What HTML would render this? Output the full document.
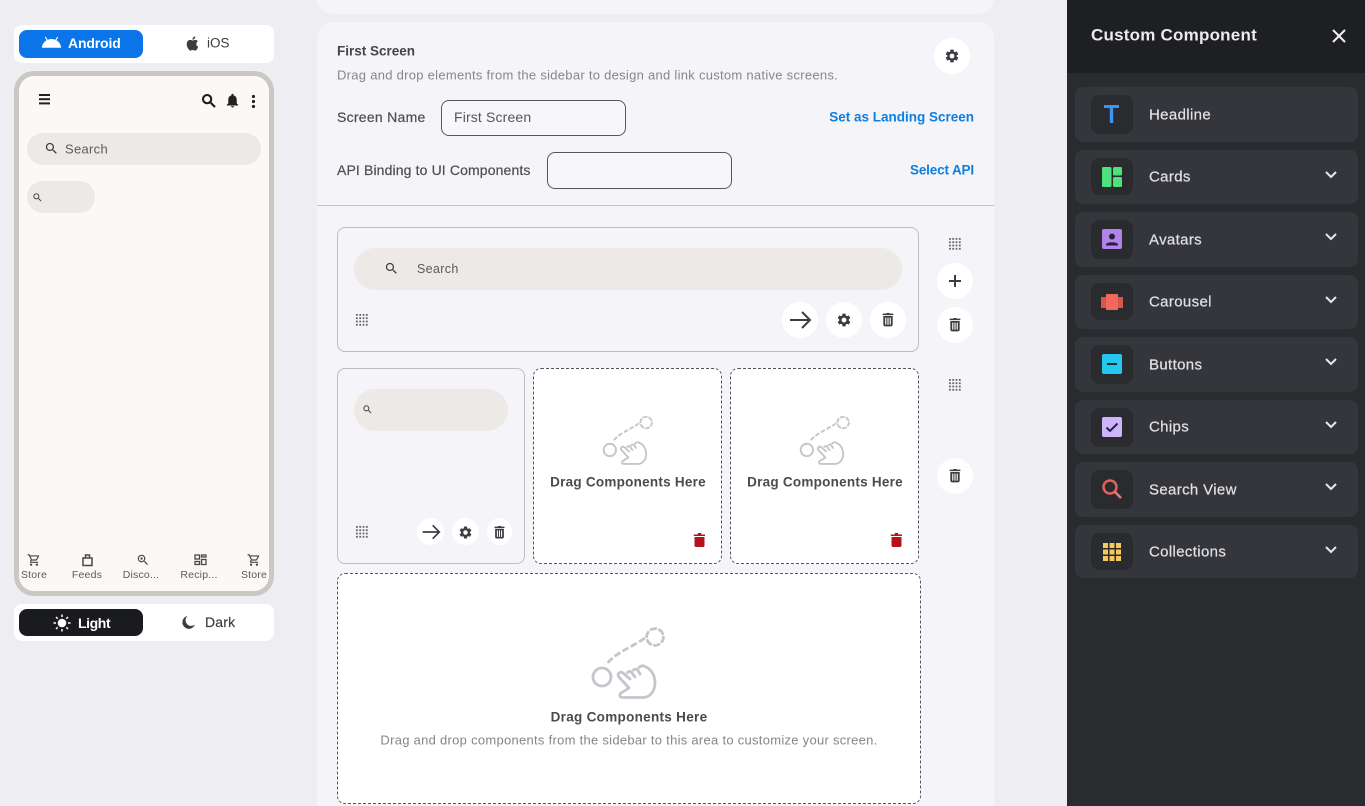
<!DOCTYPE html>
<html><head><meta charset="utf-8"><title>Custom Component</title>
<style>
html,body{margin:0;padding:0;height:806px;overflow:hidden}
body{width:1365px;position:relative;background:#eeeef2;font-family:"Liberation Sans",sans-serif;color:#3c3d42}
.a,.t,svg.i{position:absolute}
svg.i{overflow:visible}
.t{white-space:nowrap;transform:translateY(-50%);line-height:1}
.m{-webkit-text-stroke:.2px currentColor}
.c{transform:translate(-50%,-50%)}
.r{transform:translate(-100%,-50%)}
.b{font-weight:bold}
.circ{position:absolute;background:#fff;border-radius:50%}
.item{position:absolute;left:1075px;width:283px;background:#35363b;border-radius:8px}
.tile{position:absolute;left:1091px;width:42px;height:39px;background:#2a2b2f;border-radius:8px}
.lbl{font-size:15px;color:#e2e2e4;letter-spacing:.35px;left:1149px;-webkit-text-stroke:.2px currentColor}
.nav{font-size:10.500px;color:#5c5a58;letter-spacing:.2px}
.drag{position:absolute;background:#fff;border:1px dashed #55565c;border-radius:8px;box-sizing:border-box}
.box{position:absolute;background:#f5f4f9;border:1px solid #bdbdc4;border-radius:8px;box-sizing:border-box}
.pill{position:absolute;background:#ece9e6;border-radius:22px}
</style></head><body>
<svg width="0" height="0" style="position:absolute"><defs>
<path id="s" d="M15.5 14h-.79l-.28-.27C15.41 12.59 16 11.11 16 9.5 16 5.91 13.09 3 9.5 3S3 5.91 3 9.5 5.91 16 9.5 16c1.61 0 3.09-.59 4.23-1.57l.27.28v.79l5 4.99L20.49 19l-4.99-5zm-6 0C7.01 14 5 11.99 5 9.5S7.01 5 9.5 5 14 7.01 14 9.5 11.99 14 9.5 14z"/>
<path id="g" d="M19.14 12.94c.04-.3.06-.61.06-.94 0-.32-.02-.64-.07-.94l2.03-1.58c.18-.14.23-.41.12-.61l-1.92-3.32c-.12-.22-.37-.29-.59-.22l-2.39.96c-.5-.38-1.03-.7-1.62-.94l-.36-2.54c-.04-.24-.24-.41-.48-.41h-3.84c-.24 0-.43.17-.47.41l-.36 2.54c-.59.24-1.13.57-1.62.94l-2.39-.96c-.22-.08-.47 0-.59.22L2.74 8.87c-.12.21-.08.47.12.61l2.03 1.58c-.05.3-.09.63-.09.94s.02.64.07.94l-2.03 1.58c-.18.14-.23.41-.12.61l1.92 3.32c.12.22.37.29.59.22l2.39-.96c.5.38 1.03.7 1.62.94l.36 2.54c.05.24.24.41.48.41h3.84c.24 0 .44-.17.47-.41l.36-2.54c.59-.24 1.13-.56 1.62-.94l2.39.96c.22.08.47 0 .59-.22l1.92-3.32c.12-.22.07-.47-.12-.61l-2.01-1.58zM12 15.6c-1.98 0-3.6-1.62-3.6-3.6s1.62-3.6 3.6-3.6 3.6 1.62 3.6 3.6-1.62 3.6-3.6 3.6z"/>
<path id="d" fill-rule="evenodd" d="M15 2.5l-1-1h-4l-1 1H4v2.200h16V2.500zM5 6v13c0 1.400.9 2.500 2.300 2.500h9.400c1.400 0 2.300-1.100 2.300-2.500V6zm2.800 2.500h1.700v10.500H7.800zm3.350 0h1.700v10.500h-1.700zm3.350 0h1.700v10.500h-1.700z"/>
<path id="c" d="M15.55 13c.75 0 1.41-.41 1.75-1.03l3.58-6.49c.37-.66-.11-1.48-.87-1.48H5.21l-.94-2H1v2h2l3.6 7.59-1.35 2.44C4.52 15.37 5.48 17 7 17h12v-2H7l1.1-2h7.45zM6.16 6h12.15l-2.76 5H8.53L6.16 6zM7 18c-1.1 0-1.99.9-1.99 2S5.9 22 7 22s2-.9 2-2-.9-2-2-2zm10 0c-1.1 0-1.99.9-1.99 2s.89 2 1.99 2 2-.9 2-2-.9-2-2-2z"/>
<g id="dots" fill="#66676c"><rect x="0" y="0" width="1.800" height="1.800"/><rect x="3.300" y="0" width="1.800" height="1.800"/><rect x="6.600" y="0" width="1.800" height="1.800"/><rect x="9.900" y="0" width="1.800" height="1.800"/><rect x="0" y="3.300" width="1.800" height="1.800"/><rect x="3.300" y="3.300" width="1.800" height="1.800"/><rect x="6.600" y="3.300" width="1.800" height="1.800"/><rect x="9.900" y="3.300" width="1.800" height="1.800"/><rect x="0" y="6.600" width="1.800" height="1.800"/><rect x="3.300" y="6.600" width="1.800" height="1.800"/><rect x="6.600" y="6.600" width="1.800" height="1.800"/><rect x="9.900" y="6.600" width="1.800" height="1.800"/><rect x="0" y="9.900" width="1.800" height="1.800"/><rect x="3.300" y="9.900" width="1.800" height="1.800"/><rect x="6.600" y="9.900" width="1.800" height="1.800"/><rect x="9.900" y="9.900" width="1.800" height="1.800"/></g>
<g id="hand" fill="none" stroke="#c3c7cc" stroke-width="2.800" stroke-linecap="round" stroke-linejoin="round"><circle cx="10" cy="51" r="9"/><circle cx="63" cy="11" r="8.400" stroke-dasharray="5 3.800"/><path d="M16.500 36C24 27 38 22 53 12" stroke-dasharray="4.500 5"/><path d="M37 62L26.500 50.500C25 47.500 28.500 45 31 47L38 53M35.500 46.500C37 45 39 45 40 47L43 51M41.500 44C43 42.500 45 43 46 44.500L48 48M47 41.500C49 39.500 51 39.500 53 40.500C59 43 63 49 63 57C63 65 58 71.500 51 71.500H31C27 71.500 27 67.500 30 66.500L37 62"/></g>
<path id="ar" d="M2 12H22M14 4L22 12L14 20" fill="none" stroke="#3c3d42" stroke-width="2"/>
<path id="rt" d="M1.500 2.500H5.500L6 1H9L9.500 2.500H13V4H2ZM2.500 5H12.500V13.500C12.500 14.500 12 15 11 15H4C3 15 2.500 14.500 2.500 13.500Z"/>
</defs></svg>

<!-- left column -->
<div class="a" style="left:14px;top:25px;width:260px;height:38px;background:#fff;border-radius:8px"></div>
<div class="a" style="left:19px;top:30px;width:124px;height:28px;background:#0b74e8;border-radius:8px"></div>
<svg class="i" style="left:41px;top:32px" width="21" height="21" viewBox="0 0 24 24" fill="#fff"><path d="M17.6 9.48l1.84-3.18c.16-.31.04-.69-.26-.85-.29-.15-.65-.06-.83.22l-1.88 3.24c-2.86-1.21-6.08-1.21-8.94 0L5.65 5.67c-.19-.29-.58-.38-.87-.2-.28.18-.37.54-.22.83L6.4 9.48C3.3 11.25 1.28 14.44 1 18h22c-.28-3.56-2.3-6.75-5.4-8.52z"/></svg>
<span class="t b" style="left:68px;top:43px;font-size:14px;color:#fff;letter-spacing:-.15px">Android</span>
<svg class="i" style="left:184px;top:35px" width="17" height="17" viewBox="0 0 24 24" fill="#3c3d42"><path d="M18.71 19.5c-.83 1.24-1.71 2.45-3.05 2.47-1.34.03-1.77-.79-3.29-.79-1.53 0-2 .77-3.27.82-1.31.05-2.3-1.32-3.14-2.53C4.25 17 2.94 12.45 4.7 9.39c.87-1.52 2.43-2.48 4.12-2.51 1.28-.02 2.5.87 3.29.87.78 0 2.26-1.07 3.81-.91.65.03 2.47.26 3.64 1.98-.09.06-2.17 1.28-2.15 3.81.03 3.02 2.65 4.03 2.68 4.04-.03.07-.42 1.44-1.38 2.83M13 3.5c.73-.83 1.94-1.46 2.94-1.5.13 1.17-.34 2.35-1.04 3.19-.69.85-1.83 1.51-2.95 1.42-.15-1.15.41-2.35 1.05-3.11z"/></svg>
<span class="t" style="left:207px;top:43px;font-size:13.500px">iOS</span>

<div class="a" style="left:14px;top:71px;width:260px;height:525px;box-sizing:border-box;background:#fcf8f5;border:5px solid #cbc8c3;border-radius:20px"></div>
<svg class="i" style="left:37px;top:92px" width="15" height="15" viewBox="0 0 15 15" fill="#222"><rect x="2" y="2" width="11" height="2"/><rect x="2" y="6.200" width="11" height="2"/><rect x="2" y="10.400" width="11" height="2"/></svg>
<svg class="i" style="left:200px;top:92px" width="18" height="18" viewBox="0 0 24 24" fill="#1c1b1b" stroke="#1c1b1b" stroke-width=".8"><use href="#s"/></svg>
<svg class="i" style="left:224px;top:92px" width="17" height="17" viewBox="0 0 24 24" fill="#222"><path d="M12 22c1.1 0 2-.9 2-2h-4c0 1.1.89 2 2 2zm6-6v-5c0-3.07-1.64-5.64-4.5-6.32V4c0-.83-.67-1.5-1.5-1.5s-1.5.67-1.5 1.5v.68C7.63 5.36 6 7.92 6 11v5l-2 2v1h16v-1l-2-2z"/></svg>
<svg class="i" style="left:250px;top:94px" width="7" height="15" viewBox="0 0 7 15" fill="#222"><circle cx="3.500" cy="2.500" r="1.600"/><circle cx="3.500" cy="7.500" r="1.600"/><circle cx="3.500" cy="12.500" r="1.600"/></svg>
<div class="pill" style="left:27px;top:133px;width:234px;height:32px;border-radius:16px"></div>
<svg class="i" style="left:44px;top:141px" width="15" height="15" viewBox="0 0 24 24" fill="#3c3d42"><use href="#s"/></svg>
<span class="t" style="left:65px;top:149px;font-size:13px;color:#5c5a58;letter-spacing:.3px">Search</span>
<div class="pill" style="left:27px;top:181px;width:68px;height:32px;border-radius:16px"></div>
<svg class="i" style="left:32px;top:192px" width="11" height="11" viewBox="0 0 24 24" fill="#3c3d42"><use href="#s"/></svg>

<svg class="i" style="left:27px;top:553px" width="14" height="14" viewBox="0 0 24 24" fill="#4a4846"><use href="#c"/></svg>
<svg class="i" style="left:81px;top:553px" width="13" height="14" viewBox="0 0 13 14" fill="none" stroke="#4a4846" stroke-width="1.500"><path d="M2 5H11V12.500H2ZM4.500 5V2H8.500V5"/></svg>
<svg class="i" style="left:136px;top:553px" width="14" height="14" viewBox="0 0 24 24" fill="#4a4846"><use href="#s"/><circle cx="9.500" cy="9.500" r="2"/></svg>
<svg class="i" style="left:194px;top:554px" width="13" height="12" viewBox="0 0 13 12" fill="none" stroke="#4a4846" stroke-width="1.300"><rect x="1" y="1" width="4.500" height="4"/><rect x="7.500" y="1" width="4.500" height="2"/><rect x="1" y="7.500" width="4.500" height="3"/><rect x="7.500" y="5.500" width="4.500" height="5"/></svg>
<svg class="i" style="left:247px;top:553px" width="14" height="14" viewBox="0 0 24 24" fill="#4a4846"><use href="#c"/></svg>
<span class="t c nav" style="left:34px;top:575px">Store</span>
<span class="t c nav" style="left:87px;top:575px">Feeds</span>
<span class="t c nav" style="left:141px;top:575px">Disco...</span>
<span class="t c nav" style="left:199px;top:575px">Recip...</span>
<span class="t c nav" style="left:254px;top:575px">Store</span>

<div class="a" style="left:14px;top:604px;width:260px;height:37px;background:#fff;border-radius:8px"></div>
<div class="a" style="left:19px;top:609px;width:124px;height:27px;background:#1a1b1f;border-radius:8px"></div>
<svg class="i" style="left:53px;top:614px" width="18" height="18" viewBox="0 0 18 18" fill="#fff" stroke="#fff"><circle cx="9" cy="9" r="3.800"/><path stroke-width="1.500" d="M9 0.500V3M9 15V17.500M0.500 9H3M15 9H17.500M3 3L4.700 4.700M13.300 13.300L15 15M3 15L4.700 13.300M13.300 4.700L15 3" fill="none"/></svg>
<span class="t b" style="left:78px;top:623px;font-size:14px;color:#fff;letter-spacing:-.4px">Light</span>
<svg class="i" style="left:181px;top:615px" width="15" height="15" viewBox="0 0 15 15" fill="#3c3d42"><path d="M6.500 1A6.500 6.500 0 1 0 14 9.500A5.200 5.200 0 0 1 6.500 1Z"/></svg>
<span class="t m" style="left:205px;top:622px;font-size:14px;letter-spacing:.2px">Dark</span>

<!-- center -->
<div class="a" style="left:317px;top:-20px;width:677px;height:34px;background:#f5f4f9;border-radius:16px"></div>
<div class="a" style="left:317px;top:22px;width:677px;height:800px;background:#f5f4f9;border-radius:16px"></div>
<div class="a" style="left:317px;top:205px;width:677px;height:1px;background:#c3c3c8"></div>
<span class="t b" style="left:337px;top:51px;font-size:13.500px;color:#44454a">First Screen</span>
<span class="t" style="left:337px;top:75px;font-size:13px;color:#85868b;letter-spacing:.28px">Drag and drop elements from the sidebar to design and link custom native screens.</span>
<div class="circ" style="left:934px;top:38px;width:36px;height:36px"></div>
<svg class="i" style="left:944px;top:48px" width="16" height="16" viewBox="0 0 24 24" fill="#3c3d42"><use href="#g"/></svg>
<span class="t m" style="left:337px;top:117px;font-size:14px;color:#4c4d52;letter-spacing:.27px">Screen Name</span>
<div class="a" style="left:441px;top:100px;width:185px;height:36px;box-sizing:border-box;border:1px solid #55565c;border-radius:8px;background:#f7f6fa"></div>
<span class="t" style="left:454px;top:117px;font-size:14px;color:#55565c;letter-spacing:.15px">First Screen</span>
<span class="t r b" style="left:974px;top:117px;font-size:13.500px;color:#0d7fe0">Set as Landing Screen</span>
<span class="t m" style="left:337px;top:170px;font-size:14px;color:#4c4d52;letter-spacing:.13px">API Binding to UI Components</span>
<div class="a" style="left:547px;top:152px;width:185px;height:37px;box-sizing:border-box;border:1px solid #55565c;border-radius:8px;background:#f7f6fa"></div>
<span class="t r b" style="left:974px;top:170px;font-size:13.500px;color:#0d7fe0;letter-spacing:-.15px">Select API</span>

<!-- row 1 -->
<div class="box" style="left:337px;top:227px;width:582px;height:125px"></div>
<div class="pill" style="left:354px;top:248px;width:548px;height:42px;border-radius:21px"></div>
<svg class="i" style="left:384px;top:261px" width="15" height="15" viewBox="0 0 24 24" fill="#3c3d42"><use href="#s"/></svg>
<span class="t" style="left:417px;top:269px;font-size:12.500px;color:#5c5a58;letter-spacing:.35px">Search</span>
<svg class="i" style="left:356px;top:314px" width="12" height="12" viewBox="0 0 12 12"><use href="#dots"/></svg>
<div class="circ" style="left:782px;top:302px;width:36px;height:36px"></div>
<svg class="i" style="left:788px;top:308px" width="24" height="24" viewBox="0 0 24 24"><use href="#ar"/></svg>
<div class="circ" style="left:826px;top:302px;width:36px;height:36px"></div>
<svg class="i" style="left:836px;top:312px" width="16" height="16" viewBox="0 0 24 24" fill="#3c3d42"><use href="#g"/></svg>
<div class="circ" style="left:870px;top:302px;width:36px;height:36px"></div>
<svg class="i" style="left:880px;top:312px" width="16" height="16" viewBox="0 0 24 24" fill="#3c3d42"><use href="#d"/></svg>

<svg class="i" style="left:949px;top:238px" width="12" height="12" viewBox="0 0 12 12"><use href="#dots"/></svg>
<div class="circ" style="left:937px;top:263px;width:36px;height:36px"></div>
<svg class="i" style="left:948px;top:274px" width="14" height="14" viewBox="0 0 14 14" fill="#3c3d42"><rect x="6" y="1" width="2" height="12"/><rect x="1" y="6" width="12" height="2"/></svg>
<div class="circ" style="left:937px;top:307px;width:36px;height:36px"></div>
<svg class="i" style="left:947px;top:317px" width="16" height="16" viewBox="0 0 24 24" fill="#3c3d42"><use href="#d"/></svg>

<!-- row 2 -->
<div class="box" style="left:337px;top:368px;width:188px;height:196px"></div>
<div class="pill" style="left:354px;top:389px;width:154px;height:42px;border-radius:21px"></div>
<svg class="i" style="left:362px;top:404px" width="11" height="11" viewBox="0 0 24 24" fill="#3c3d42"><use href="#s"/></svg>
<svg class="i" style="left:356px;top:526px" width="12" height="12" viewBox="0 0 12 12"><use href="#dots"/></svg>
<div class="circ" style="left:417px;top:518px;width:27px;height:27px"></div>
<svg class="i" style="left:421px;top:522px" width="20" height="20" viewBox="0 0 24 24"><use href="#ar"/></svg>
<div class="circ" style="left:452px;top:518px;width:27px;height:27px"></div>
<svg class="i" style="left:458px;top:525px" width="15" height="15" viewBox="0 0 24 24" fill="#3c3d42"><use href="#g"/></svg>
<div class="circ" style="left:487px;top:518px;width:25px;height:27px"></div>
<svg class="i" style="left:492px;top:525px" width="15" height="15" viewBox="0 0 24 24" fill="#3c3d42"><use href="#d"/></svg>

<div class="drag" style="left:533px;top:368px;width:189px;height:196px"></div>
<svg class="i" style="left:603px;top:415px" width="50" height="50" viewBox="0 0 73 73"><use href="#hand"/></svg>
<span class="t c b" style="left:628px;top:482px;font-size:13.500px;color:#4a4b50;letter-spacing:.25px">Drag Components Here</span>
<svg class="i" style="left:692px;top:532px" width="15" height="16" viewBox="0 0 15 16" fill="#b5121b"><use href="#rt"/></svg>

<div class="drag" style="left:730px;top:368px;width:189px;height:196px"></div>
<svg class="i" style="left:800px;top:415px" width="50" height="50" viewBox="0 0 73 73"><use href="#hand"/></svg>
<span class="t c b" style="left:825px;top:482px;font-size:13.500px;color:#4a4b50;letter-spacing:.25px">Drag Components Here</span>
<svg class="i" style="left:889px;top:532px" width="15" height="16" viewBox="0 0 15 16" fill="#b5121b"><use href="#rt"/></svg>

<svg class="i" style="left:949px;top:379px" width="12" height="12" viewBox="0 0 12 12"><use href="#dots"/></svg>
<div class="circ" style="left:937px;top:458px;width:36px;height:36px"></div>
<svg class="i" style="left:947px;top:468px" width="16" height="16" viewBox="0 0 24 24" fill="#3c3d42"><use href="#d"/></svg>

<!-- row 3 -->
<div class="drag" style="left:337px;top:573px;width:584px;height:231px"></div>
<svg class="i" style="left:592px;top:626px" width="73" height="73" viewBox="0 0 73 73"><use href="#hand"/></svg>
<span class="t c b" style="left:629px;top:717px;font-size:13.500px;color:#4a4b50;letter-spacing:.3px">Drag Components Here</span>
<span class="t c" style="left:629px;top:740px;font-size:13px;color:#85868b;letter-spacing:.28px">Drag and drop components from the sidebar to this area to customize your screen.</span>

<!-- right panel -->
<div class="a" style="left:1067px;top:0;width:298px;height:806px;background:#2a2b2f"></div>
<div class="a" style="left:1067px;top:0;width:298px;height:73px;background:#1e1f23"></div>
<span class="t b" style="left:1091px;top:35px;font-size:17px;color:#ecebed;letter-spacing:.22px">Custom Component</span>
<svg class="i" style="left:1331px;top:28px" width="16" height="16" viewBox="0 0 16 16" stroke="#f2f2f2" stroke-width="2"><path d="M2 2L14 14M14 2L2 14"/></svg>

<div class="item" style="top:87px;height:55px"></div>
<div class="item" style="top:150px;height:54px"></div>
<div class="item" style="top:212px;height:55px"></div>
<div class="item" style="top:275px;height:54px"></div>
<div class="item" style="top:337px;height:55px"></div>
<div class="item" style="top:400px;height:54px"></div>
<div class="item" style="top:462px;height:55px"></div>
<div class="item" style="top:525px;height:53px"></div>

<div class="tile" style="top:95px"></div>
<div class="tile" style="top:158px;height:37px"></div>
<div class="tile" style="top:220px"></div>
<div class="tile" style="top:283px;height:37px"></div>
<div class="tile" style="top:345px"></div>
<div class="tile" style="top:408px"></div>
<div class="tile" style="top:470px"></div>
<div class="tile" style="top:533px;height:37px"></div>

<svg class="i" style="left:1103px;top:105px" width="17" height="18" viewBox="0 0 17 18" fill="#3a96f2"><rect x="1" y="0" width="15" height="3"/><rect x="6.800" y="0" width="3.400" height="18"/></svg>
<svg class="i" style="left:1102px;top:167px" width="20" height="20" viewBox="0 0 20 20" fill="#4ee27d"><rect x="0" y="0" width="9.500" height="20" rx="1.500"/><rect x="11" y="0" width="9" height="8.500" rx="1.500"/><rect x="11" y="10" width="9" height="10" rx="1.500"/></svg>
<svg class="i" style="left:1102px;top:229px" width="20" height="20" viewBox="0 0 20 20"><rect width="20" height="20" rx="2" fill="#b283ea"/><circle cx="10" cy="7.500" r="3" fill="#2b2140"/><path d="M4 15.500C4 12.500 16 12.500 16 15.500V16.500H4Z" fill="#2b2140"/></svg>
<svg class="i" style="left:1101px;top:294px" width="22" height="16" viewBox="0 0 22 16"><rect x="0" y="3" width="5" height="11" fill="#d9574a"/><rect x="17" y="3" width="5" height="11" fill="#d9574a"/><rect x="5" y="0" width="12" height="16" fill="#f0695c"/></svg>
<svg class="i" style="left:1102px;top:354px" width="20" height="20" viewBox="0 0 20 20"><rect width="20" height="20" rx="2" fill="#23c8ec"/><rect x="5" y="9" width="10" height="2" fill="#18303a"/></svg>
<svg class="i" style="left:1102px;top:417px" width="20" height="20" viewBox="0 0 20 20"><rect width="20" height="20" rx="2" fill="#cdb5fb"/><path d="M4.500 10.500L8 14L15.500 6.500" fill="none" stroke="#2b2140" stroke-width="2"/></svg>
<svg class="i" style="left:1101px;top:478px" width="22" height="22" viewBox="0 0 22 22" fill="none" stroke="#e0625a" stroke-width="2.500"><circle cx="9" cy="9" r="6.500"/><path d="M14 14L20 20" stroke="#d88478"/></svg>
<svg class="i" style="left:1103px;top:543px" width="18" height="18" viewBox="0 0 18 18" fill="#f6c95c"><rect width="5" height="5"/><rect x="6.500" width="5" height="5"/><rect x="13" width="5" height="5"/><rect y="6.500" width="5" height="5"/><rect x="6.500" y="6.500" width="5" height="5"/><rect x="13" y="6.500" width="5" height="5"/><rect y="13" width="5" height="5"/><rect x="6.500" y="13" width="5" height="5"/><rect x="13" y="13" width="5" height="5"/></svg>

<span class="t lbl" style="top:114.500px">Headline</span>
<span class="t lbl" style="top:176.500px">Cards</span>
<span class="t lbl" style="top:239.500px">Avatars</span>
<span class="t lbl" style="top:301.500px">Carousel</span>
<span class="t lbl" style="top:364.500px">Buttons</span>
<span class="t lbl" style="top:426.500px">Chips</span>
<span class="t lbl" style="top:489.500px">Search View</span>
<span class="t lbl" style="top:551.500px">Collections</span>

<svg class="i" style="left:1325px;top:171px" width="12" height="8" viewBox="0 0 12 8" fill="none" stroke="#e8e8ea" stroke-width="2"><path d="M1 1L6 6L11 1"/></svg>
<svg class="i" style="left:1325px;top:233px" width="12" height="8" viewBox="0 0 12 8" fill="none" stroke="#e8e8ea" stroke-width="2"><path d="M1 1L6 6L11 1"/></svg>
<svg class="i" style="left:1325px;top:296px" width="12" height="8" viewBox="0 0 12 8" fill="none" stroke="#e8e8ea" stroke-width="2"><path d="M1 1L6 6L11 1"/></svg>
<svg class="i" style="left:1325px;top:358px" width="12" height="8" viewBox="0 0 12 8" fill="none" stroke="#e8e8ea" stroke-width="2"><path d="M1 1L6 6L11 1"/></svg>
<svg class="i" style="left:1325px;top:421px" width="12" height="8" viewBox="0 0 12 8" fill="none" stroke="#e8e8ea" stroke-width="2"><path d="M1 1L6 6L11 1"/></svg>
<svg class="i" style="left:1325px;top:483px" width="12" height="8" viewBox="0 0 12 8" fill="none" stroke="#e8e8ea" stroke-width="2"><path d="M1 1L6 6L11 1"/></svg>
<svg class="i" style="left:1325px;top:546px" width="12" height="8" viewBox="0 0 12 8" fill="none" stroke="#e8e8ea" stroke-width="2"><path d="M1 1L6 6L11 1"/></svg>
</body></html>
